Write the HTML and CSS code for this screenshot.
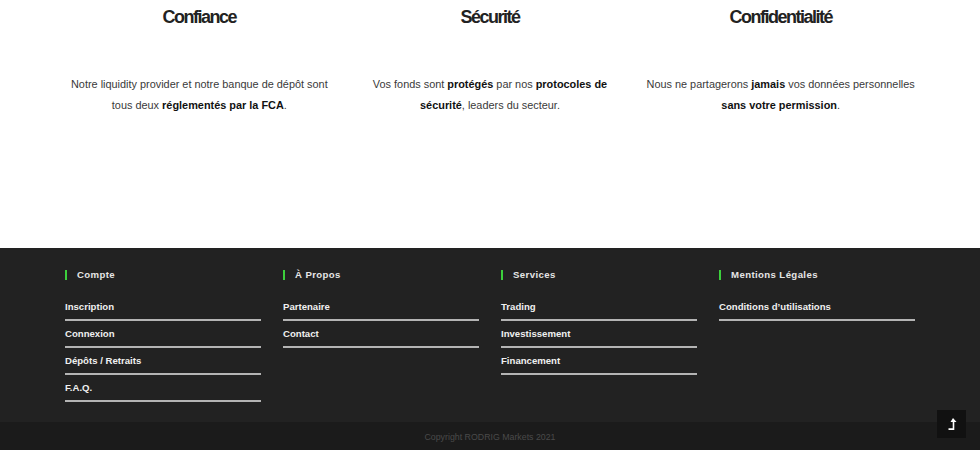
FILE: index.html
```html
<!DOCTYPE html>
<html lang="fr">
<head>
<meta charset="utf-8">
<title>RODRIG Markets</title>
<link rel="stylesheet" href="styles.css">
</head>
<body>
<section class="values">
  <div class="container values-grid">
    <div class="value">
      <h3 class="value-title">Confiance</h3>
      <p class="value-text">Notre liquidity provider et notre banque de dépôt sont tous deux <strong>réglementés par la FCA</strong>.</p>
    </div>
    <div class="value">
      <h3 class="value-title">Sécurité</h3>
      <p class="value-text">Vos fonds sont <strong>protégés</strong> par nos <strong>protocoles de sécurité</strong>, leaders du secteur.</p>
    </div>
    <div class="value">
      <h3 class="value-title">Confidentialité</h3>
      <p class="value-text">Nous ne partagerons <strong>jamais</strong> vos données personnelles <strong>sans votre permission</strong>.</p>
    </div>
  </div>
</section>
<footer class="footer">
  <div class="container footer-grid">
    <div class="footer-col">
      <h4 class="footer-title">Compte</h4>
      <ul class="footer-links">
        <li><a href="#">Inscription</a></li>
        <li><a href="#">Connexion</a></li>
        <li><a href="#">Dépôts / Retraits</a></li>
        <li><a href="#">F.A.Q.</a></li>
      </ul>
    </div>
    <div class="footer-col">
      <h4 class="footer-title">À Propos</h4>
      <ul class="footer-links">
        <li><a href="#">Partenaire</a></li>
        <li><a href="#">Contact</a></li>
      </ul>
    </div>
    <div class="footer-col">
      <h4 class="footer-title">Services</h4>
      <ul class="footer-links">
        <li><a href="#">Trading</a></li>
        <li><a href="#">Investissement</a></li>
        <li><a href="#">Financement</a></li>
      </ul>
    </div>
    <div class="footer-col">
      <h4 class="footer-title">Mentions Légales</h4>
      <ul class="footer-links">
        <li><a href="#">Conditions d’utilisations</a></li>
      </ul>
    </div>
  </div>
</footer>
<div class="copyright">Copyright RODRIG Markets 2021</div>
<a class="to-top" href="#" aria-label="Haut de page">
  <svg width="10" height="14" viewBox="0 0 10 14" aria-hidden="true">
    <path d="M6 1 L9.5 5 H7.3 V13 H1.5 V11.3 H5.7 V5 H3.5 Z" fill="#fff"/>
  </svg>
</a>
</body>
</html>
```
FILE: styles.css
```css
html, body {
  margin: 0;
  padding: 0;
  background: #1b1b1b;
  font-family: "Liberation Sans", Arial, sans-serif;
}

.container {
  width: 872px;
  margin: 0 auto;
}

.values {
  background: #fff;
  padding: 6px 0 132px;
}

.values-grid {
  display: grid;
  grid-template-columns: repeat(3, 1fr);
}

.value {
  padding: 0 8px;
  text-align: center;
}

.value-title {
  margin: 0 0 46px;
  font-size: 18px;
  line-height: 22px;
  font-weight: 700;
  letter-spacing: -1.5px;
  color: #222;
}

.value-text {
  margin: 0;
  font-size: 10.9px;
  line-height: 21px;
  color: #3a3a3a;
}

.value-text strong {
  color: #111;
  font-weight: 700;
}

.footer {
  background: #222;
  padding: 21px 0 20px;
}

.footer-grid {
  display: grid;
  grid-template-columns: repeat(4, 1fr);
}

.footer-col {
  padding: 0 11px;
}

.footer-title {
  margin: 0 0 13px;
  display: flex;
  align-items: center;
  gap: 10px;
  font-size: 9.6px;
  line-height: 12px;
  font-weight: 700;
  letter-spacing: 0.4px;
  color: #e6e6e6;
}

.footer-title::before {
  content: "";
  width: 2px;
  height: 10px;
  background: #3ccf3c;
}

.footer-links {
  list-style: none;
  margin: 0;
  padding: 0;
}

.footer-links li {
  padding: 7px 0 6px;
  border-bottom: 2px solid #b4b4b4;
  font-size: 9.6px;
  line-height: 12px;
}

.footer-links a {
  font-size: 9.6px;
  font-weight: 700;
  color: #f0f0f0;
  text-decoration: none;
}

.copyright {
  background: #1b1b1b;
  padding: 10px 0 12px;
  text-align: center;
  font-size: 8.8px;
  line-height: 11px;
  color: #4a4a4a;
}

.to-top {
  position: fixed;
  right: 14px;
  bottom: 12px;
  width: 29px;
  height: 28px;
  background: #111;
  display: flex;
  align-items: center;
  justify-content: center;
}
```
